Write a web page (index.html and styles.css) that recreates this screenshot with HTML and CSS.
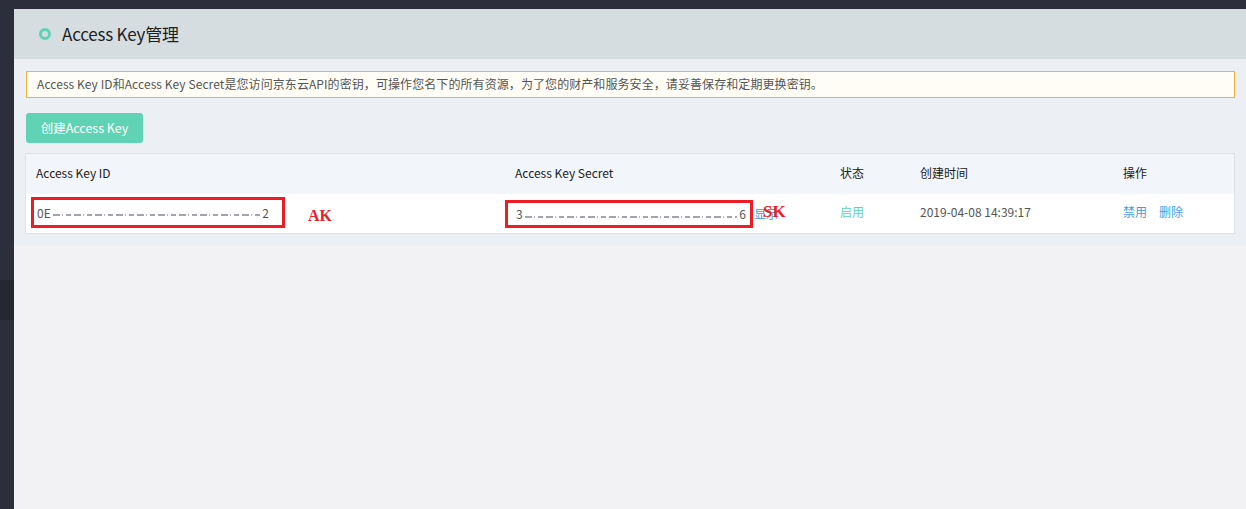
FILE: index.html
```html
<!DOCTYPE html>
<html lang="zh-CN">
<head>
<meta charset="utf-8">
<title>Access Key管理</title>
<link rel="stylesheet" href="styles.css">
</head>
<body>
<div class="layout">
  <aside class="sidebar">
    <div class="side-active"></div>
  </aside>
  <main class="main">
    <div class="panel">
      <header class="panel-head">
        <span class="ring"></span>
        <h1 class="title">Access Key管理</h1>
      </header>
      <section class="content">
        <div class="alert">Access Key ID和Access Key Secret是您访问京东云API的密钥，可操作您名下的所有资源，为了您的财产和服务安全，请妥善保存和定期更换密钥。</div>
        <button class="btn-create">创建Access Key</button>
        <div class="table">
          <div class="row head">
            <div class="cell">Access Key ID</div>
            <div class="cell">Access Key Secret</div>
            <div class="cell">状态</div>
            <div class="cell">创建时间</div>
            <div class="cell">操作</div>
          </div>
          <div class="row body">
            <div class="cell cell-id">
              <span class="mark mark-ak"><span class="val">0E</span><span class="mask"></span><span class="val">2</span></span>
              <span class="tag tag-ak">AK</span>
            </div>
            <div class="cell cell-secret">
              <span class="mark mark-sk"><span class="val">3</span><span class="mask"></span><span class="val">6</span></span>
              <span class="link show">显示</span>
              <span class="tag tag-sk">SK</span>
            </div>
            <div class="cell status">启用</div>
            <div class="cell">2019-04-08 14:39:17</div>
            <div class="cell actions"><span class="link">禁用</span><span class="link">删除</span></div>
          </div>
        </div>
      </section>
    </div>
  </main>
</div>
</body>
</html>
```
FILE: styles.css
```css
* { box-sizing: border-box; }
html, body { margin: 0; padding: 0; }
body {
  background: #2c2e3b;
  font-family: "Noto Sans", "Noto Sans CJK SC", sans-serif;
  color: #333;
  width: 1246px;
  height: 509px;
  overflow: hidden;
}
.layout { display: flex; height: 509px; }
.sidebar { width: 14px; flex: none; padding-top: 280px; }
.side-active { height: 40px; background: #252830; }
.main { flex: 1; padding-top: 9px; display: flex; flex-direction: column; }
.panel { flex: 1; background: #f2f2f4; display: flex; flex-direction: column; }
.panel-head {
  height: 50px;
  background: #d5dde0;
  display: flex;
  align-items: center;
  padding-left: 25px;
  padding-bottom: 1px;
}
.ring {
  width: 12px; height: 12px;
  border: 3px solid #5fd3b4;
  border-radius: 50%;
  margin-right: 11px;
}
.title {
  margin: 0;
  font-size: 17px;
  font-weight: 400;
  color: #1f1f1f;
  font-family: "Noto Sans CJK SC", sans-serif;
  letter-spacing: -0.2px;
  line-height: 20px;
}
.content {
  background: #ecf0f4;
  padding: 12px 11px 11px 12px;
}
.alert {
  height: 27px;
  border: 1px solid #f0b43a;
  background: #fffdf6;
  font-size: 12px;
  color: #555;
  line-height: 23px;
  padding-left: 10px;
  letter-spacing: 0.08px;
  font-family: "Noto Sans CJK SC", sans-serif;
}
.btn-create {
  display: block;
  margin-top: 15px;
  width: 117px;
  height: 30px;
  border: none;
  border-radius: 3px;
  background: #5fd3b4;
  color: #fff;
  font-size: 12.5px;
  font-family: "Noto Sans CJK SC", sans-serif;
  padding: 0 0 2px;
}
.table {
  margin: 10px 0 0 -1px;
  border: 1px solid #dde2e7;
  background: #fff;
}
.row {
  display: grid;
  grid-template-columns: 479px 325px 80px 203px 1fr;
  align-items: center;
  font-size: 12px;
  font-family: "Noto Sans CJK SC", sans-serif;
  padding-bottom: 4px;
}
.row.head { height: 40px; background: #f2f5f9; color: #222; }
.row.body { height: 39px; color: #555; }
.cell { padding-left: 10px; position: relative; display: flex; align-items: center; }
.cell-id { padding-left: 5px; }
.cell-secret { padding-left: 0; }
.mark {
  display: flex;
  align-items: center;
  border: 3px solid #ee1c25;
  padding: 0 13px 0 3px;
  color: #555;
}
.mark-ak { width: 254px; height: 31px; margin-top: 1px; }
.mark-sk { width: 248px; height: 28px; padding-left: 8px; padding-right: 4px; margin-top: 4px; }
.mask {
  flex: 1;
  height: 2px;
  margin: 6px 2px 0;
  background: repeating-linear-gradient(90deg, #8a8f96 0 7px, transparent 7px 9px, #a0a4aa 9px 10px, transparent 10px 13px, #8a8f96 13px 18px, transparent 18px 21px);
  opacity: .8;
}
.tag {
  position: absolute;
  font-family: "Liberation Serif", serif;
  font-weight: 700;
  color: #e8202a;
  font-size: 16px;
}
.tag-ak { left: 282px; top: 11px; }
.tag-sk { left: 258px; top: 6px; font-size: 17px; }
.link { color: #3d9fe8; }
.show { margin-left: 1px; font-size: 12px; margin-top: 3px; }
.status { color: #5fd3b4; }
.actions { gap: 12px; }
```
